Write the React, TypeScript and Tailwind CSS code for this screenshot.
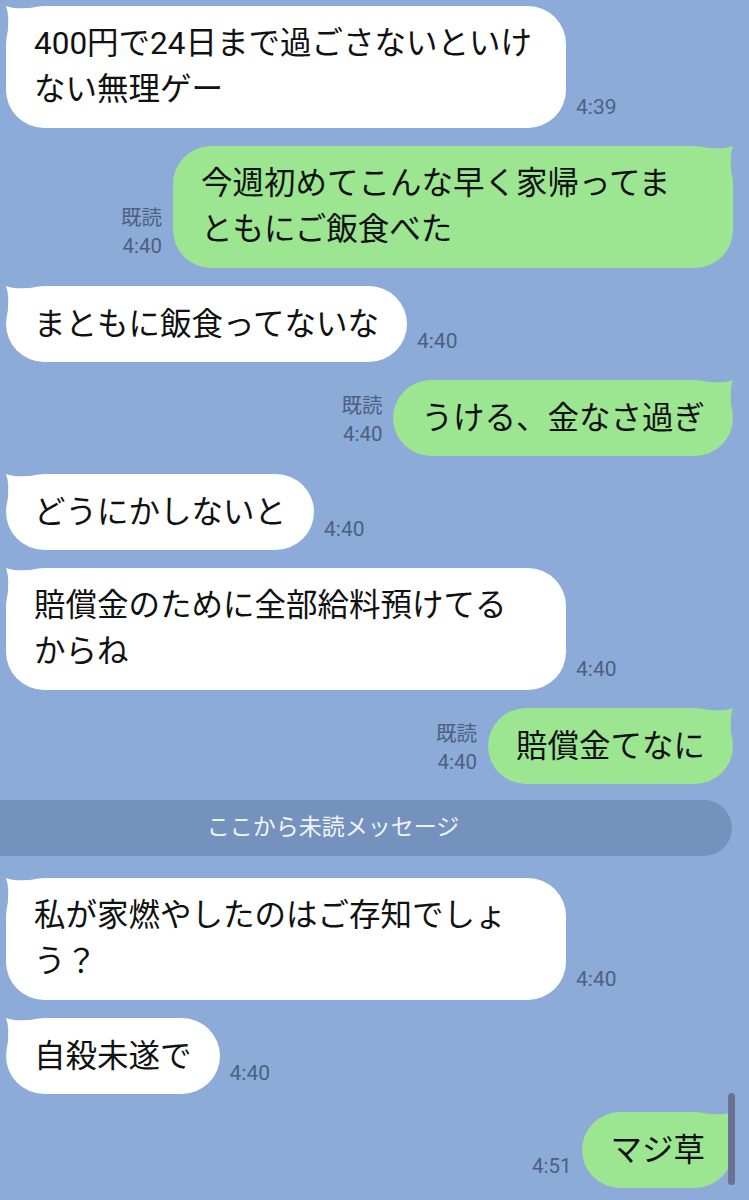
import React from 'react';

const font = { fontFamily: 'Roboto, "Noto Sans CJK JP", sans-serif' };

type Msg =
  | { kind: 'in'; lines: string[]; time: string }
  | { kind: 'out'; lines: string[]; time: string; read?: boolean }
  | { kind: 'divider'; text: string };

const messages: Msg[] = [
  { kind: 'in', lines: ['400円で24日まで過ごさないといけ', 'ない無理ゲー'], time: '4:39' },
  { kind: 'out', lines: ['今週初めてこんな早く家帰ってま', 'ともにご飯食べた'], time: '4:40', read: true },
  { kind: 'in', lines: ['まともに飯食ってないな'], time: '4:40' },
  { kind: 'out', lines: ['うける、金なさ過ぎ'], time: '4:40', read: true },
  { kind: 'in', lines: ['どうにかしないと'], time: '4:40' },
  { kind: 'in', lines: ['賠償金のために全部給料預けてる', 'からね'], time: '4:40' },
  { kind: 'out', lines: ['賠償金てなに'], time: '4:40', read: true },
  { kind: 'divider', text: 'ここから未読メッセージ' },
  { kind: 'in', lines: ['私が家燃やしたのはご存知でしょ', 'う？'], time: '4:40' },
  { kind: 'in', lines: ['自殺未遂で'], time: '4:40' },
  { kind: 'out', lines: ['マジ草'], time: '4:51' },
];

function Ear({ fill, right }: { fill: string; right?: boolean }) {
  return (
    <svg
      width="32"
      height="32"
      viewBox="0 0 32 32"
      className={right ? 'absolute right-0 top-0 -scale-x-100' : 'absolute left-0 top-0'}
    >
      <path d="M0 0 Q10 4 32 1 L32 32 L1 32 Q4 10 0 0 Z" fill={fill} />
    </svg>
  );
}

function Bubble({ lines, out }: { lines: string[]; out?: boolean }) {
  const multi = lines.length > 1;
  return (
    <div
      className={`relative rounded-[38px] px-[28px] py-[14.5px] text-[31.5px] text-[#111] ${
        out ? 'bg-[#9ce591]' : 'bg-white'
      } ${multi ? 'w-[560px] leading-[46.5px]' : 'leading-[47px]'}`}
    >
      <Ear fill={out ? '#9ce591' : '#ffffff'} right={out} />
      <div className="relative whitespace-nowrap">
        {lines.map((l, i) => (
          <div key={i}>{l}</div>
        ))}
      </div>
    </div>
  );
}

export default function App() {
  return (
    <div className="relative h-[1200px] w-full overflow-hidden bg-[#8cabd9]" style={font}>
      <div className="flex flex-col gap-[18px] pt-[6px]">
        {messages.map((m, i) => {
          if (m.kind === 'divider') {
            return (
              <div
                key={i}
                className="-ml-[66px] mb-[4px] -mt-[2px] flex h-[56px] w-[798px] items-center justify-center rounded-full bg-[#7591bd] text-[23px] text-[#f1f4fa]"
              >
                {m.text}
              </div>
            );
          }
          if (m.kind === 'in') {
            return (
              <div key={i} className="flex items-end pl-[6px]">
                <Bubble lines={m.lines} />
                <span className="mb-[9px] ml-[10px] text-[21px] leading-[24px] text-[#4f5f7f]">{m.time}</span>
              </div>
            );
          }
          return (
            <div key={i} className="flex items-end justify-end pr-[16px]">
              <div className="mb-[8px] mr-[11px] flex flex-col items-end text-[20.5px] leading-[28px] text-[#4f5f7f]">
                {m.read && <span>既読</span>}
                <span>{m.time}</span>
              </div>
              <Bubble lines={m.lines} out />
            </div>
          );
        })}
      </div>
      <div className="absolute right-[14px] top-[1093px] h-[92px] w-[7px] rounded-full bg-[#69738f]" />
    </div>
  );
}
